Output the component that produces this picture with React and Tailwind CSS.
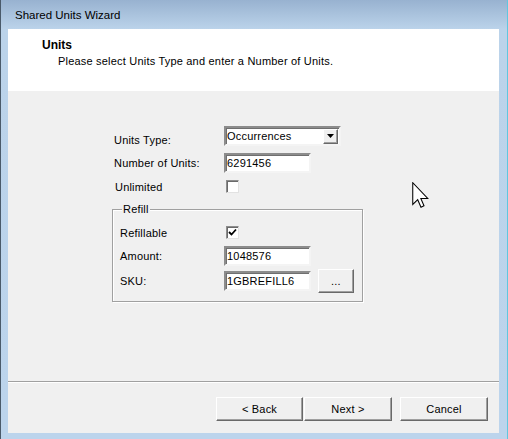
import React from 'react';

const FONT = { fontFamily: '"Liberation Sans", Arial, sans-serif' };

const sunken =
  'bg-white border-2 border-t-[#8c8c8c] border-l-[#8c8c8c] border-r-[#f4f4f4] border-b-[#f4f4f4] shadow-[inset_1px_1px_0_#6f6f6f]';

function TextBox({ value, width = 'w-[87px]' }) {
  return (
    <div className={`${width} h-[20px] ${sunken} flex items-center pl-[1px] text-[11px] leading-none text-black`}>
      {value}
    </div>
  );
}

function CheckBox({ checked }) {
  return (
    <div className="ml-[2px] w-[13px] h-[13px] bg-white border border-t-[#8d8d8d] border-l-[#8d8d8d] border-r-[#e2e2e2] border-b-[#e2e2e2] shadow-[inset_1px_1px_0_#6a6a6a] flex items-center justify-center">
      {checked && (
        <svg width="9" height="9" viewBox="0 0 9 9">
          <path d="M1 4 L3.5 6.5 L8 1.5" fill="none" stroke="#000" strokeWidth="1.8" />
        </svg>
      )}
    </div>
  );
}

function Button({ children, className = '' }) {
  return (
    <button className={`h-[24px] bg-[#f0f0f0] border border-t-white border-l-white border-r-[#696969] border-b-[#696969] shadow-[inset_-1px_-1px_0_#a0a0a0] text-[11px] tracking-[0.2px] text-black leading-none ${className}`}>
      {children}
    </button>
  );
}

export default function App() {
  return (
    <div
      className="relative w-[508px] h-[439px] overflow-hidden flex flex-col pl-[8px] pr-[8px] pb-[6px] bg-[linear-gradient(180deg,#98b2d0_0px,#bbd3ea_29px,#bcd4ec_100%)] border-l border-l-[#4a5a6a] border-r border-r-[#5fc7e0]"
      style={FONT}
    >
      {/* Title bar */}
      <div className="h-[29px] shrink-0 flex items-center pl-[6px] pt-[2px] text-[11.5px] text-black">
        Shared Units Wizard
      </div>

      {/* Window content */}
      <div className="flex-1 flex flex-col bg-[#f0f0f0] -ml-[1px]">
        {/* Header */}
        <div className="h-[62px] shrink-0 bg-white pl-[34px] pt-[9px]">
          <div className="text-[12px] font-bold text-black leading-[14px]">Units</div>
          <div className="pl-[16px] pt-[3px] text-[11px] tracking-[0.2px] text-black leading-[13px]">
            Please select Units Type and enter a Number of Units.
          </div>
        </div>

        {/* Form area */}
        <div className="h-[290px] shrink-0 pl-[106px] pt-[35px] text-[11px] tracking-[0.2px] text-black">
          <div className="flex items-start h-[20px]">
            <div className="w-[110px] pt-[8px] leading-[13px]">Units Type:</div>
            <div className={`w-[117px] h-[20px] ${sunken} flex items-center justify-between pl-[1px] pr-[1px]`}>
              <span className="leading-none">Occurrences</span>
              <div className="w-[15px] h-[15px] bg-[#f0f0f0] border border-t-white border-l-white border-r-[#696969] border-b-[#696969] shadow-[inset_-1px_-1px_0_#a0a0a0] flex items-center justify-center">
                <svg width="7" height="4" viewBox="0 0 7 4">
                  <path d="M0 0 H7 L3.5 4 Z" fill="#000" />
                </svg>
              </div>
            </div>
          </div>

          <div className="flex items-center h-[20px] mt-[7px]">
            <div className="w-[110px] pt-[1px] leading-[13px]">Number of Units:</div>
            <TextBox value="6291456" />
          </div>

          <div className="flex items-center h-[13px] mt-[7px]">
            <div className="w-[110px] pl-[1px] pt-[2px] leading-[13px]">Unlimited</div>
            <CheckBox />
          </div>

          {/* Refill group */}
          <div className="relative -ml-[2px] mt-[16px] w-[251px] h-[93px] border border-[#a0a0a0] shadow-[1px_1px_0_#ffffff,inset_1px_1px_0_#ffffff] pl-[7px] pt-[16px]">
            <span className="absolute left-[9px] -top-[7px] px-[1px] bg-[#f0f0f0] leading-[13px]">Refill</span>

            <div className="flex items-center h-[13px]">
              <div className="w-[104px] pt-[1px] leading-[13px]">Refillable</div>
              <CheckBox checked />
            </div>

            <div className="flex items-center h-[20px] mt-[7px]">
              <div className="w-[104px] leading-[13px]">Amount:</div>
              <TextBox value="1048576" />
            </div>

            <div className="flex items-center h-[22px] mt-[4px]">
              <div className="w-[104px] leading-[13px]">SKU:</div>
              <TextBox value="1GBREFILL6" />
              <Button className="ml-[7px] w-[36px] h-[22px]">...</Button>
            </div>
          </div>
        </div>

        {/* Separator */}
        <div className="h-[2px] shrink-0 border-t border-t-[#a0a0a0] border-b border-b-white" />

        {/* Buttons */}
        <div className="flex-1 flex items-start pt-[14px] pl-[208px]">
          <Button className="w-[87px]">&lt; Back</Button>
          <Button className="w-[88px] ml-[1px]">Next &gt;</Button>
          <Button className="w-[88px] ml-[8px]">Cancel</Button>
        </div>
      </div>

      {/* Mouse cursor */}
      <svg className="absolute left-[411px] top-[182px]" width="18" height="27" viewBox="0 0 12 18">
        <path
          d="M0.5 0.5 L0.5 15 L3.8 11.8 L6 16.8 L8 15.9 L5.9 11 L10.5 11 Z"
          fill="#fff"
          stroke="#000"
          strokeWidth="0.7"
          strokeLinejoin="miter"
        />
      </svg>
    </div>
  );
}
